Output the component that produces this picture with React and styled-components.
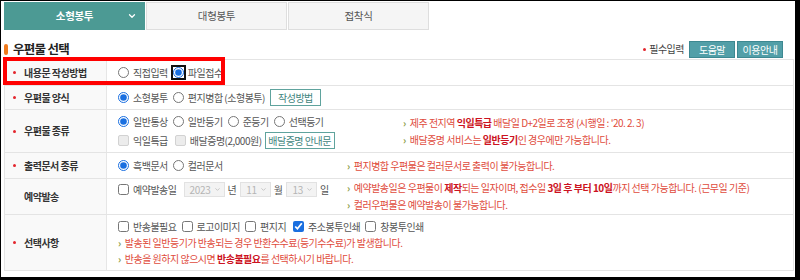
import React from 'react';
import styled, { createGlobalStyle } from 'styled-components';
import { ChevronDown } from 'lucide-react';

const GlobalStyle = createGlobalStyle`
  html, body {
    margin: 0;
    padding: 0;
    background: #fff;
  }
`;

// Outer frame (screenshot crop with black edge)
const Frame = styled.div`
  width: 800px;
  height: 280px;
  box-sizing: border-box;
  border-style: solid;
  border-color: #000;
  border-width: 1px 5px 3px 1px;
  padding: 1px 1px 0 3px;
  background: #fff;
  overflow: hidden;
  font-family: "Noto Sans CJK KR", "Noto Sans", sans-serif;
  font-size: 10px;
  letter-spacing: -0.5px;
  line-height: 16px;
  color: #555;
`;

const TabBar = styled.div`
  display: flex;
  height: 28px;
`;

const Tab = styled.div`
  display: grid;
  grid-template-columns: 1fr auto 1fr;
  align-items: center;
  width: 141px;
  height: 28px;
  box-sizing: border-box;
  margin-right: 1px;
  padding: 0 7px;
  background: ${p => (p.$active ? '#4c9a94' : '#f5f5f5')};
  border: 1px solid ${p => (p.$active ? '#4c9a94' : '#dedede')};
  color: ${p => (p.$active ? '#fff' : '#555')};
  font-size: 10.5px;
  letter-spacing: -0.3px;
  font-weight: ${p => (p.$active ? 700 : 400)};

  svg {
    justify-self: end;
  }
`;

const HeaderRow = styled.div`
  display: flex;
  align-items: center;
  height: 29px;
  box-sizing: border-box;
  padding: 9px 11px 0 0;
`;

const Title = styled.h2`
  display: flex;
  align-items: center;
  gap: 5px;
  margin: 0;
  flex: 1;
  font-size: 12.5px;
  letter-spacing: -0.7px;
  font-weight: 700;
  color: #222;

  &::before {
    content: '';
    width: 4px;
    height: 11px;
    border-radius: 2px;
    background: #f07a1c;
  }
`;

const Required = styled.span`
  display: flex;
  align-items: center;
  gap: 3px;
  margin-right: 3px;
  color: #444;

  &::before {
    content: '';
    width: 3px;
    height: 3px;
    border-radius: 50%;
    background: #e3262d;
  }
`;

const HelpButton = styled.button`
  width: 46px;
  height: 17px;
  margin-left: 2px;
  padding: 0;
  border: 1px solid #3d8891;
  background: #529fa8;
  color: #fff;
  font-family: inherit;
  font-size: 10px;
  letter-spacing: -0.5px;
`;

const Table = styled.div`
  position: relative;
  border: 1px solid #e4e4e4;
`;

// red annotation box drawn over the first row
const Highlight = styled.div`
  position: absolute;
  top: -3px;
  left: -2px;
  width: 222px;
  height: 28px;
  box-sizing: border-box;
  border: 4px solid #ff0000;
  pointer-events: none;
`;

const Row = styled.div`
  display: grid;
  grid-template-columns: 102px 1fr;
  height: ${p => p.$h}px;
  border-bottom: 1px solid #e4e4e4;

  &:last-of-type {
    border-bottom: none;
  }
`;

const Label = styled.div`
  display: flex;
  align-items: center;
  gap: 8px;
  padding-left: 8px;
  background: #f9f9f9;
  border-right: 1px solid #e6e6e6;
  font-weight: 700;
  color: #333;

  &::before {
    content: '';
    width: 3px;
    height: 3px;
    border-radius: 50%;
    background: #e3262d;
    visibility: ${p => (p.$required ? 'visible' : 'hidden')};
  }
`;

const Cell = styled.div`
  display: flex;
  flex-direction: ${p => (p.$column ? 'column' : 'row')};
  justify-content: ${p => (p.$column ? 'center' : 'flex-start')};
  align-items: ${p => (p.$column ? 'flex-start' : 'center')};
  padding-left: 11px;
`;

const SplitCell = styled.div`
  display: grid;
  grid-template-columns: ${p => p.$left}px 1fr;
  align-items: center;
  padding-left: 11px;
`;

const Stack = styled.div`
  display: flex;
  flex-direction: column;
  gap: ${p => p.$gap || 0}px;
  align-self: ${p => (p.$top ? 'start' : 'center')};
  padding-top: ${p => (p.$top ? 3 : 0)}px;
`;

const Line = styled.div`
  display: flex;
  align-items: center;
  height: ${p => p.$h || 17}px;
`;

const Option = styled.label`
  display: inline-flex;
  align-items: center;
  gap: 4px;
  margin-right: ${p => (p.$mr !== undefined ? p.$mr : 5)}px;
  white-space: nowrap;
  color: #555;
`;

const Radio = styled.input.attrs({ type: 'radio' })`
  width: 11px;
  height: 11px;
  margin: 0;
  accent-color: #1a6fe0;
  ${p => p.$focus && 'outline: 2px solid #111; outline-offset: 0; border-radius: 50%;'}
`;

const Check = styled.input.attrs({ type: 'checkbox' })`
  width: 11px;
  height: 11px;
  margin: 0;
  accent-color: #1a6fe0;

  &:disabled {
    appearance: none;
    box-sizing: border-box;
    background: #ececec;
    border: 1px solid #d2d2d2;
    border-radius: 2px;
  }
`;

const OutlineButton = styled.button`
  height: 17px;
  width: ${p => p.$w}px;
  padding: 0;
  border: 1px solid #5fa39d;
  background: #fff;
  color: #3f8580;
  font-family: inherit;
  font-size: 10px;
  letter-spacing: -0.5px;
`;

const FakeSelect = styled.span`
  display: inline-flex;
  align-items: center;
  gap: 3px;
  height: 15px;
  box-sizing: border-box;
  padding: 0 3px 0 5px;
  background: #f3f3f3;
  border: 1px solid #e2e2e2;
  color: #b5b5b5;
  letter-spacing: -0.3px;
`;

const Unit = styled.span`
  margin: 0 4px 0 3px;
  color: #555;
`;

const Note = styled.p`
  display: flex;
  align-items: center;
  margin: 0;
  height: ${p => p.$h || 16}px;
  white-space: nowrap;
  color: #e04b3c;

  &::before {
    content: '›';
    margin-right: 4px;
    color: #8a9b40;
    font-weight: 700;
    font-size: 10px;
  }

  b {
    color: #cc1221;
    font-weight: 700;
  }
`;

const SelectBox = ({ value }) => (
  <FakeSelect>
    {value}
    <ChevronDown size={7} strokeWidth={2.5} color="#b5b5b5" />
  </FakeSelect>
);

export default function App() {
  return (
    <>
      <GlobalStyle />
      <Frame>
        <TabBar>
          <Tab $active>
            <span />
            소형봉투
            <ChevronDown size={10} strokeWidth={3} color="#fff" />
          </Tab>
          <Tab>
            <span />
            대형봉투
            <span />
          </Tab>
          <Tab>
            <span />
            접착식
            <span />
          </Tab>
        </TabBar>

        <HeaderRow>
          <Title>우편물 선택</Title>
          <Required>필수입력</Required>
          <HelpButton>도움말</HelpButton>
          <HelpButton>이용안내</HelpButton>
        </HeaderRow>

        <Table>
          <Highlight />

          <Row $h={25}>
            <Label $required>내용문 작성방법</Label>
            <Cell>
              <Option><Radio name="method" />직접입력</Option>
              <Option><Radio name="method" defaultChecked $focus />파일접수</Option>
            </Cell>
          </Row>

          <Row $h={23}>
            <Label $required>우편물 양식</Label>
            <Cell>
              <Option><Radio name="form" defaultChecked />소형봉투</Option>
              <Option><Radio name="form" />편지병합 (소형봉투)</Option>
              <OutlineButton $w={51}>작성방법</OutlineButton>
            </Cell>
          </Row>

          <Row $h={42}>
            <Label $required>우편물 종류</Label>
            <SplitCell $left={285}>
              <Stack $gap={2}>
                <Line>
                  <Option><Radio name="kind" defaultChecked />일반통상</Option>
                  <Option><Radio name="kind" />일반등기</Option>
                  <Option><Radio name="kind" />준등기</Option>
                  <Option><Radio name="kind" />선택등기</Option>
                </Line>
                <Line>
                  <Option $mr={7}><Check disabled />익일특급</Option>
                  <Option $mr={3}><Check disabled />배달증명(2,000원)</Option>
                  <OutlineButton $w={70}>배달증명 안내문</OutlineButton>
                </Line>
              </Stack>
              <Stack>
                <Note $h={17}>제주 전지역&nbsp;<b>익일특급</b>&nbsp;배달일 D+2일로 조정 (시행일 : '20. 2. 3)</Note>
                <Note $h={17}>배달증명 서비스는&nbsp;<b>일반등기</b>인 경우에만 가능합니다.</Note>
              </Stack>
            </SplitCell>
          </Row>

          <Row $h={25}>
            <Label $required>출력문서 종류</Label>
            <SplitCell $left={229}>
              <Line>
                <Option><Radio name="print" defaultChecked />흑백문서</Option>
                <Option><Radio name="print" />컬러문서</Option>
              </Line>
              <Note>편지병합 우편물은 컬러문서로 출력이 불가능합니다.</Note>
            </SplitCell>
          </Row>

          <Row $h={35}>
            <Label>예약발송</Label>
            <SplitCell $left={229}>
              <Stack $top>
                <Line $h={15}>
                  <Option $mr={7}><Check />예약발송일</Option>
                  <SelectBox value="2023" />
                  <Unit>년</Unit>
                  <SelectBox value="11" />
                  <Unit>월</Unit>
                  <SelectBox value="13" />
                  <Unit>일</Unit>
                </Line>
              </Stack>
              <Stack>
                <Note $h={16.5}>예약발송일은 우편물이&nbsp;<b>제작</b>되는 일자이며, 접수일&nbsp;<b>3일 후 부터 10일</b>까지 선택 가능합니다. (근무일 기준)</Note>
                <Note $h={16.5}>컬러우편물은 예약발송이 불가능합니다.</Note>
              </Stack>
            </SplitCell>
          </Row>

          <Row $h={55}>
            <Label $required>선택사항</Label>
            <Cell $column>
              <Line $h={16}>
                <Option><Check />반송불필요</Option>
                <Option><Check />로고이미지</Option>
                <Option $mr={7}><Check />편지지</Option>
                <Option><Check defaultChecked />주소봉투인쇄</Option>
                <Option><Check />창봉투인쇄</Option>
              </Line>
              <Note>발송된 일반등기가 반송되는 경우 반환수수료(등기수수료)가 발생합니다.</Note>
              <Note>반송을 원하지 않으시면&nbsp;<b>반송불필요</b>를 선택하시기 바랍니다.</Note>
            </Cell>
          </Row>
        </Table>
      </Frame>
    </>
  );
}
